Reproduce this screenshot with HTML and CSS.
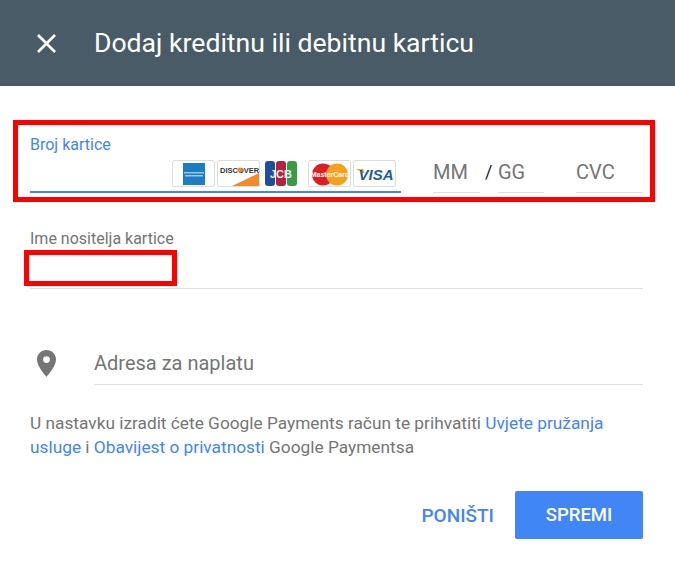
FILE: index.html
```html
<!DOCTYPE html>
<html lang="en">
<head>
  <meta charset="UTF-8" />
  <meta name="viewport" content="width=device-width, initial-scale=1.0" />
  <title>Dodaj kreditnu ili debitnu karticu</title>
  <link rel="stylesheet" href="styles.css">
</head>
<body>
  <div class="header">
    <svg class="close-icon" width="19" height="19" viewBox="5 5 14 14">
      <path d="M19 6.41 17.59 5 12 10.59 6.41 5 5 6.41 10.59 12 5 17.59 6.41 19 12 13.41 17.59 19 19 17.59 13.41 12z" fill="#fff" />
    </svg>
    <h1 class="title">Dodaj kreditnu ili debitnu karticu</h1>
  </div>

  <div class="content">
    <div class="card-row">
      <div class="card-number">
        <div class="label label-active">Broj kartice</div>
        <div class="logos">
          <div class="logo logo-amex">
            <svg width="42" height="27" viewBox="0 0 42 27">
              <rect x="10" y="2" width="22" height="22" fill="#1c7cc4" />
              <rect x="11" y="11" width="20" height="1.5" fill="#9ec8e8" />
              <rect x="12" y="14" width="18" height="1.5" fill="#9ec8e8" />
            </svg>
          </div>
          <div class="logo logo-discover">
            <svg width="42" height="27" viewBox="0 0 42 27">
              <path d="M14 25 41 12V25z" fill="#f08a2c" />
              <text x="2" y="12" class="logo-text discover-text">DISCOVER</text>
              <circle cx="22" cy="9" r="2.500" fill="#f08a2c" />
            </svg>
          </div>
          <div class="logo-plain">
            <svg width="34" height="27" viewBox="0 0 34 27">
              <rect x="1" y="1" width="10" height="25" rx="3" fill="#1f4f9c" />
              <rect x="12" y="1" width="10" height="25" rx="3" fill="#b3233f" />
              <rect x="23" y="1" width="10" height="25" rx="3" fill="#3c9a46" />
              <text x="17" y="18" text-anchor="middle" class="logo-text jcb-text">JCB</text>
            </svg>
          </div>
          <div class="logo logo-mc">
            <svg width="42" height="27" viewBox="0 0 42 27">
              <circle cx="14" cy="13.500" r="11" fill="#dc1f26" />
              <circle cx="28" cy="13.500" r="11" fill="#f6a01e" />
              <text x="21" y="16" text-anchor="middle" class="logo-text mc-text">MasterCard</text>
            </svg>
          </div>
          <div class="logo logo-visa">
            <svg width="42" height="27" viewBox="0 0 42 27">
              <path d="M2 8h7l2 5z" fill="#eda52b" />
              <text x="22" y="19" text-anchor="middle" class="logo-text visa-text">VISA</text>
            </svg>
          </div>
        </div>
      </div>
      <div class="small-field field-mm">MM</div>
      <div class="slash">/</div>
      <div class="small-field field-gg">GG</div>
      <div class="small-field field-cvc">CVC</div>
    </div>

    <div class="name-field">
      <div class="label">Ime nositelja kartice</div>
    </div>

    <div class="address-row">
      <svg class="pin-icon" width="19" height="27" viewBox="3.500 1.500 17 24">
        <path d="M12 1.500C7.300 1.500 3.500 5.300 3.500 10c0 6.400 8.500 15.500 8.500 15.500s8.500-9.100 8.500-15.500c0-4.700-3.800-8.500-8.500-8.500zm0 11.500a3 3 0 1 1 0-6 3 3 0 0 1 0 6z" fill="#757575" />
      </svg>
      <div class="address-field">Adresa za naplatu</div>
    </div>

    <p class="terms">U nastavku izradit ćete Google Payments račun te prihvatiti <a href="#">Uvjete pružanja usluge</a> i <a href="#">Obavijest o privatnosti</a> Google Paymentsa</p>

    <div class="actions">
      <button class="btn btn-cancel" type="button">PONIŠTI</button>
      <button class="btn btn-save" type="button">SPREMI</button>
    </div>
  </div>

  <!-- red annotation boxes on top of the form -->
  <div class="mark mark-card"></div>
  <div class="mark mark-name"></div>
</body>
</html>
```

FILE: styles.css
```css
body {
  margin: 0;
  font-family: Roboto, Arial, sans-serif;
  background-color: #fff;
  color: #757575;
}
.header {
  height: 86px;
  background-color: #485b66;
  display: flex;
  align-items: center;
  padding-left: 37px;
}
.close-icon {
  margin-right: 38px;
  flex: none;
}
.title {
  margin: 0 0 2px;
  font-size: 26.600px;
  font-weight: 400;
  color: #fff;
}
.content {
  padding: 49px 32px 0 30px;
}
.label {
  font-size: 16px;
  line-height: 18px;
  color: #757575;
}
.label-active {
  color: #4285f4;
}
.card-row {
  display: flex;
  align-items: flex-end;
  height: 58px;
}
.card-number {
  width: 371px;
  height: 57px;
  border-bottom: 2px solid #4285f4;
  box-sizing: border-box;
  flex: none;
}
.logos {
  display: flex;
  padding: 6px 0 0 142px;
}
.logo {
  width: 43px;
  height: 27px;
  box-sizing: border-box;
  border: 1px solid #ddd;
  border-radius: 2px;
  background-color: #fff;
  margin-right: 2px;
  flex: none;
}
.logo svg,
.logo-plain svg {
  display: block;
}
.logo-plain {
  width: 34px;
  margin: 0 10px 0 2px;
  flex: none;
}
.logo-text {
  font-family: "Liberation Sans", Arial, sans-serif;
  font-weight: 700;
}
.discover-text {
  font-size: 7.500px;
  fill: #333;
}
.jcb-text {
  font-size: 11px;
  fill: #e8eef0;
}
.mc-text {
  font-size: 7px;
  fill: #fff;
}
.visa-text {
  font-size: 15px;
  font-style: italic;
  fill: #1f5c98;
}
.small-field {
  font-size: 20px;
  line-height: 24px;
  height: 33px;
  box-sizing: border-box;
  border-bottom: 1px solid #e0e0e0;
  flex: none;
}
.field-mm {
  width: 47px;
  margin-left: 32px;
}
.slash {
  width: 18px;
  font-size: 18px;
  line-height: 24px;
  height: 33px;
  padding-left: 5px;
  box-sizing: border-box;
  color: #222;
  flex: none;
}
.field-gg {
  width: 46px;
}
.field-cvc {
  width: 67px;
  margin-left: 32px;
}
.name-field {
  margin-top: 37px;
  height: 59px;
  box-sizing: border-box;
  border-bottom: 1px solid #e0e0e0;
}
.address-row {
  display: flex;
  align-items: flex-start;
  margin-top: 60px;
}
.pin-icon {
  margin: 1px 38px 0 7px;
  flex: none;
}
.address-field {
  flex: 1;
  font-size: 20px;
  line-height: 24px;
  height: 36px;
  padding-top: 2px;
  box-sizing: border-box;
  border-bottom: 1px solid #e0e0e0;
}
.terms {
  margin: 26px 0 0;
  font-size: 17.300px;
  line-height: 24px;
}
.terms a {
  color: #4285f4;
  text-decoration: none;
}
.actions {
  display: flex;
  justify-content: flex-end;
  align-items: center;
  margin-top: 32px;
}
.btn {
  font-family: Roboto, Arial, sans-serif;
  font-size: 18.500px;
  font-weight: 500;
  border: none;
  padding: 0;
}
.btn-cancel {
  background: none;
  color: #4285f4;
  margin-right: 21px;
  font-size: 19px;
}
.btn-save {
  width: 128px;
  height: 48px;
  background-color: #4285f4;
  color: #fff;
  border-radius: 2px;
}
.mark {
  position: absolute;
  box-sizing: border-box;
  border: 5px solid #f00;
}
.mark-card {
  left: 13px;
  top: 120px;
  width: 642px;
  height: 82px;
}
.mark-name {
  left: 24px;
  top: 250px;
  width: 153px;
  height: 36px;
}
```
